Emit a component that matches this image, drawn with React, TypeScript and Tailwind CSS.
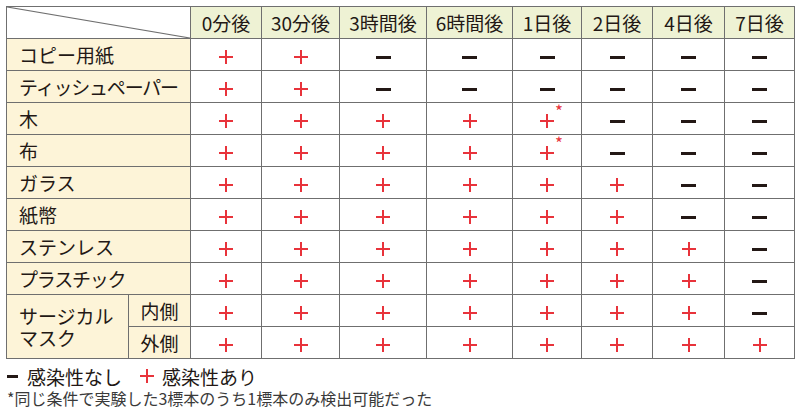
import React from "react";

type V = "p" | "m" | "s";

const headers = ["0分後", "30分後", "3時間後", "6時間後", "1日後", "2日後", "4日後", "7日後"];
const widths = [71, 78, 87, 86, 69, 71, 72, 70];

const rows: { label: string; vals: V[]; tight?: boolean }[] = [
  { label: "コピー用紙", vals: ["p", "p", "m", "m", "m", "m", "m", "m"] },
  { label: "ティッシュペーパー", vals: ["p", "p", "m", "m", "m", "m", "m", "m"], tight: true },
  { label: "木", vals: ["p", "p", "p", "p", "s", "m", "m", "m"] },
  { label: "布", vals: ["p", "p", "p", "p", "s", "m", "m", "m"] },
  { label: "ガラス", vals: ["p", "p", "p", "p", "p", "p", "m", "m"] },
  { label: "紙幣", vals: ["p", "p", "p", "p", "p", "p", "m", "m"] },
  { label: "ステンレス", vals: ["p", "p", "p", "p", "p", "p", "p", "m"] },
  { label: "プラスチック", vals: ["p", "p", "p", "p", "p", "p", "p", "m"], tight: true },
];

const inner: V[] = ["p", "p", "p", "p", "p", "p", "p", "m"];
const outer: V[] = ["p", "p", "p", "p", "p", "p", "p", "p"];

function Plus() {
  return (
    <span className="relative inline-block w-[14px] h-[14px] align-middle">
      <span className="absolute left-0 right-0 top-[6px] h-[2px] bg-[#e8333b]" />
      <span className="absolute top-0 bottom-0 left-[6px] w-[2px] bg-[#e8333b]" />
    </span>
  );
}

function Minus() {
  return <span className="inline-block w-[15px] h-[3px] bg-[#231815] align-middle" />;
}

function Cell({ v }: { v: V }) {
  return (
    <td className="border border-[#6f6f6f] bg-white text-center p-0 h-[32px]">
      {v === "p" && <Plus />}
      {v === "m" && <Minus />}
      {v === "s" && (
        <span className="relative inline-block">
          <Plus />
          <span className="absolute left-[15px] top-[-5px] text-[17px] leading-none text-[#e8333b]">*</span>
        </span>
      )}
    </td>
  );
}

export default function App() {
  return (
    <div className="w-[800px] h-[414px] bg-white text-[#231815] overflow-hidden font-['Noto_Sans_CJK_JP','Noto_Sans',sans-serif]">
      <div className="pt-[6px] pl-[6px]">
        <table className="border-collapse table-fixed w-[788px]">
          <colgroup>
            <col className="w-[122px]" />
            <col className="w-[62px]" />
            {widths.map((w, i) => (
              <col key={i} style={{ width: w }} />
            ))}
          </colgroup>
          <thead>
            <tr className="h-[32px]">
              <th colSpan={2} className="relative border border-[#6f6f6f] bg-white p-0">
                <svg className="absolute inset-0 w-full h-full" viewBox="0 0 184 32" preserveAspectRatio="none">
                  <line x1="0" y1="0" x2="184" y2="32" stroke="#6f6f6f" strokeWidth="1.2" />
                </svg>
              </th>
              {headers.map((h) => (
                <th key={h} className="border border-[#6f6f6f] bg-[#eef2d4] text-[19px] font-normal leading-none p-0 whitespace-nowrap">
                  {h}
                </th>
              ))}
            </tr>
          </thead>
          <tbody>
            {rows.map((r) => (
              <tr key={r.label} className="h-[32px]">
                <td
                  colSpan={2}
                  className={
                    r.tight
                      ? "border border-[#6f6f6f] bg-[#fdf4d8] text-[19px] leading-none pl-[12px] whitespace-nowrap tracking-[-1.2px]"
                      : "border border-[#6f6f6f] bg-[#fdf4d8] text-[19px] leading-none pl-[12px] whitespace-nowrap"
                  }
                >
                  {r.label}
                </td>
                {r.vals.map((v, i) => (
                  <Cell key={i} v={v} />
                ))}
              </tr>
            ))}
            <tr className="h-[32px]">
              <td rowSpan={2} className="border border-[#6f6f6f] bg-[#fdf4d8] text-[19px] leading-[22px] pl-[12px] align-middle">
                <div>サージカル</div>
                <div>マスク</div>
              </td>
              <td className="border border-[#6f6f6f] bg-[#fdf4d8] text-[19px] leading-none text-center">内側</td>
              {inner.map((v, i) => (
                <Cell key={i} v={v} />
              ))}
            </tr>
            <tr className="h-[32px]">
              <td className="border border-[#6f6f6f] bg-[#fdf4d8] text-[19px] leading-none text-center">外側</td>
              {outer.map((v, i) => (
                <Cell key={i} v={v} />
              ))}
            </tr>
          </tbody>
        </table>
      </div>
      <div className="flex items-center pl-[7px] mt-[7px] h-[20px] text-[19px] leading-none">
        <span className="inline-block w-[11px] h-[3px] bg-[#231815]" />
        <span className="ml-[9px]">感染性なし</span>
        <span className="ml-[18px] flex items-center">
          <Plus />
        </span>
        <span className="ml-[8px]">感染性あり</span>
      </div>
      <div className="pl-[7px] mt-[4px] h-[17px] text-[16px] leading-none text-[#3a3a3a]">
        *同じ条件で実験した3標本のうち1標本のみ検出可能だった
      </div>
    </div>
  );
}
